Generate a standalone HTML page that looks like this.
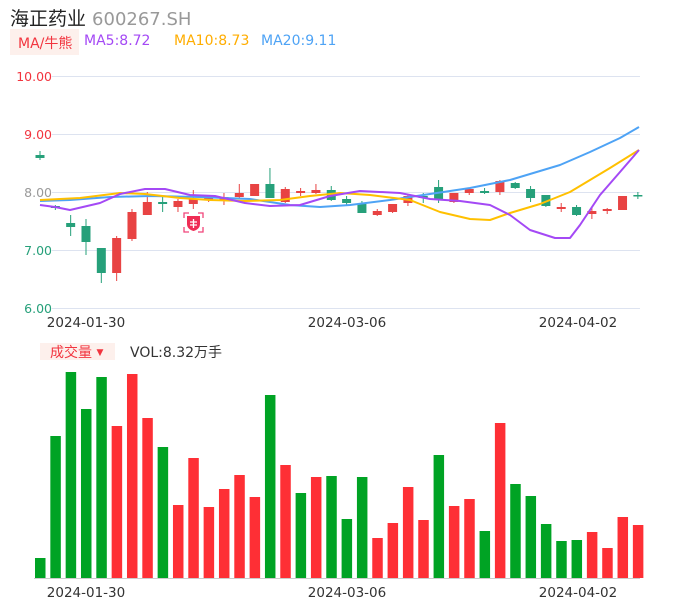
<!DOCTYPE html>
<html><head><meta charset="utf-8"><style>
html,body{margin:0;padding:0;background:#fff;width:686px;height:606px;overflow:hidden}
body{font-family:"DejaVu Sans","Noto Sans CJK SC",sans-serif;position:relative}
.t{position:absolute;white-space:nowrap}
svg{position:absolute;left:0;top:0}
</style></head><body>
<svg id="s" width="686" height="606" xmlns="http://www.w3.org/2000/svg" font-family="'DejaVu Sans','Noto Sans CJK SC',sans-serif">
<g stroke="#dde3f0" stroke-width="1">
<line x1="52" y1="76.5" x2="640" y2="76.5"/><line x1="52" y1="134.5" x2="640" y2="134.5"/><line x1="52" y1="192.5" x2="640" y2="192.5"/><line x1="52" y1="250.5" x2="640" y2="250.5"/><line x1="52" y1="308.5" x2="640" y2="308.5"/>
</g>
<line x1="34" y1="578.5" x2="640" y2="578.5" stroke="#ccc"/>
<g font-size="12.5" text-anchor="end">
<text x="52" y="81" fill="#f2353f">10.00</text>
<text x="52" y="139" fill="#f2353f">9.00</text>
<text x="52" y="197" fill="#999">8.00</text>
<text x="52" y="255" fill="#26a07a">7.00</text>
<text x="52" y="313" fill="#26a07a">6.00</text>
</g>
<g font-size="13.5" fill="#333" text-anchor="middle">
<text x="86" y="327">2024-01-30</text><text x="347" y="327">2024-03-06</text><text x="578" y="327">2024-04-02</text>
<text x="86" y="597">2024-01-30</text><text x="347" y="597">2024-03-06</text><text x="578" y="597">2024-04-02</text>
</g>
<g id="c"></g>
<g fill="none" stroke-width="2" stroke-linejoin="round">
<polyline stroke="#4ea3f5" points="40,201 70,200 110,197 150,196 200,197 250,199 290,205 320,207 350,205 390,200 430,194 470,188 510,180 560,165 590,152 620,138 639,127"/>
<polyline stroke="#ffc000" points="40,200 80,198 120,193 145,194 180,198 210,200 245,201 280,200 310,196 340,193 370,195 410,200 440,212 470,219 490,220 510,213 540,204 570,192 590,180 610,168 639,150"/>
<polyline stroke="#a449f5" points="40,205 55,207 70,210 100,203 120,194 145,189 165,189 190,195 215,196 245,203 270,206 300,205 330,196 360,191 400,193 430,199 460,201 490,205 510,215 530,230 555,238 570,238 580,225 600,195 620,172 639,150"/>
</g>
<g transform="translate(184,213)">
<path d="M0,5V0H5M14,0H19V5M19,14V19H14M5,19H0V14" fill="none" stroke="#f0457a" stroke-width="1.3"/>
<path d="M3,3H16V11Q16,16 9.5,18Q3,16 3,11Z" fill="#ef2d55"/>
<path d="M6,9H13M9.5,6V15M6,12H13" stroke="#fff" stroke-width="1.3"/>
</g>
</svg>
<div class="t" style="left:10px;top:4px;font-size:19px;color:#222">海正药业 <span style="color:#999;font-size:18px">600267.SH</span></div>
<div class="t" style="left:10px;top:29px;width:69px;height:26px;background:#fdf0ec"></div>
<div class="t" style="left:18px;top:33px;font-size:14px;color:#f2353f">MA/牛熊</div>
<div class="t" style="left:84px;top:33px;font-size:14px;color:#a449f5">MA5:8.72</div>
<div class="t" style="left:174px;top:33px;font-size:14px;color:#ffad00">MA10:8.73</div>
<div class="t" style="left:261px;top:33px;font-size:14px;color:#4ea3f5">MA20:9.11</div>
<div class="t" style="left:40px;top:343px;width:75px;height:17px;background:#fdf0ec"></div>
<div class="t" style="left:50px;top:342px;font-size:14px;color:#f2353f">成交量 <span style="font-size:9px;vertical-align:2px">▼</span></div>
<div class="t" style="left:130px;top:342px;font-size:14px;color:#333">VOL:8.32万手</div>
<script>
var ns="http://www.w3.org/2000/svg",g=document.getElementById('c'),s=document.getElementById('s');
function el(n,a,p){var e=document.createElementNS(ns,n);for(var k in a)e.setAttribute(k,a[k]);(p||g).appendChild(e);}
var vol=[[0,558],[0,436],[0,372],[0,409],[0,377],[1,426],[1,374],[1,418],[0,447],[1,505],[1,458],[1,507],[1,489],[1,475],[1,497],[0,395],[1,465],[0,493],[1,477],[0,476],[0,519],[0,477],[1,538],[1,523],[1,487],[1,520],[0,455],[1,506],[1,499],[0,531],[1,423],[0,484],[0,496],[0,524],[0,541],[0,540],[1,532],[1,548],[1,517],[1,525]];
vol.forEach(function(v,i){var x=35+i*15.33;el('rect',{x:x,y:v[1],width:10.5,height:578-v[1],fill:v[0]?'#fe2f35':'#00a324'},s);});
var c=[[0,155,158,151,160],[0,206,208,205,210],[0,223,227,215,236],[0,226,242,219,255],[0,248,273,248,283],[1,238,273,236,281],[1,212,239,209,241],[1,202,215,192,215],[0,202,204,197,212],[1,201,207,199,212],[1,199,204,190,209],[1,198,200,197,202],[1,197,200,193,205],[1,193,197,184,198],[1,184,196,184,196],[0,184,198,168,198],[1,189,202,187,203],[1,191,193,188,196],[1,190,193,184,194],[0,190,200,186,201],[0,199,203,196,206],[0,204,213,201,213],[1,211,215,209,216],[1,204,212,204,213],[1,196,203,195,206],[0,196,198,193,203],[0,187,199,180,203],[1,193,202,193,203],[1,189,193,188,195],[0,191,193,188,194],[1,181,192,180,195],[0,183,188,182,189],[0,189,198,186,202],[0,195,206,195,207],[1,207,209,203,212],[0,207,215,205,216],[1,211,214,207,219],[1,209,211,208,214],[1,196,210,196,210],[0,195,196,192,199]];
c.forEach(function(v,i){var x=40+i*15.33,col=v[0]?'#e84343':'#26a07a';
el('line',{x1:x,y1:v[3],x2:x,y2:v[4],stroke:col,'stroke-width':1});
el('rect',{x:x-4.5,y:v[1],width:9,height:Math.max(1.5,v[2]-v[1]),fill:col});});
</script>
</body></html>
